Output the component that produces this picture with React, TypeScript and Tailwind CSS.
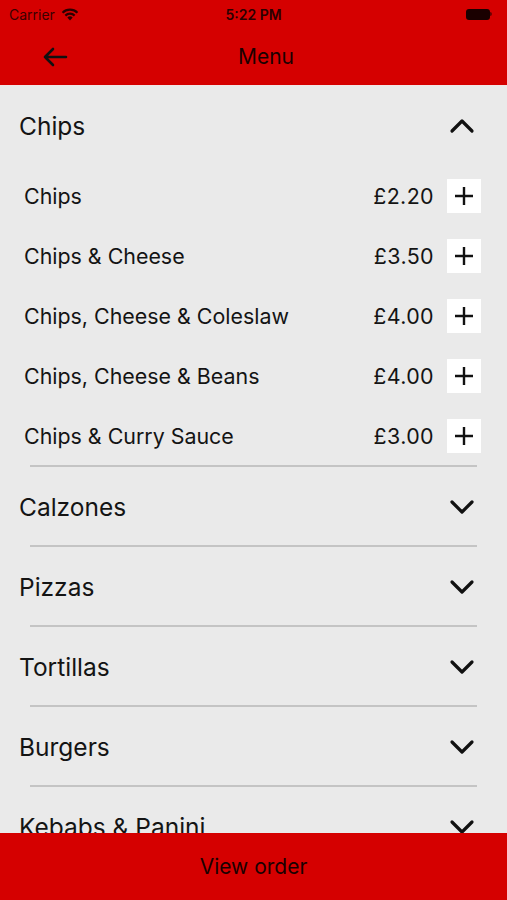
import React from "react";

const items = [
  { name: "Chips", price: "£2.20" },
  { name: "Chips & Cheese", price: "£3.50" },
  { name: "Chips, Cheese & Coleslaw", price: "£4.00" },
  { name: "Chips, Cheese & Beans", price: "£4.00" },
  { name: "Chips & Curry Sauce", price: "£3.00" },
];

const sections = ["Calzones", "Pizzas", "Tortillas", "Burgers", "Kebabs & Panini"];

function Chevron({ up }: { up?: boolean }) {
  return (
    <svg width="26" height="16" viewBox="0 0 26 16" fill="none">
      <path
        d={up ? "M3 13 L13 3 L23 13" : "M3 3 L13 13 L23 3"}
        stroke="#111"
        strokeWidth="3.2"
        strokeLinecap="round"
        strokeLinejoin="round"
      />
    </svg>
  );
}

export default function App() {
  return (
    <div
      className="relative w-[507px] h-[900px] overflow-hidden bg-[#eaeaea] text-[#141414]"
      style={{ fontFamily: "Inter, 'Noto Sans', sans-serif" }}
    >
      <div className="bg-[#d50000] h-[86px] border-b border-[#f2e6e6]">
        <div className="h-[28px] flex items-center justify-between px-[9px] relative">
          <div className="flex items-center gap-[6px] text-[14px] text-[#3a0000]">
            <span>Carrier</span>
            <svg width="18" height="13" viewBox="0 0 18 13">
              <path d="M9 12.5 L6.3 9.6 A4 4 0 0 1 11.7 9.6 Z" fill="#2a0000" />
              <path d="M3.6 6.8 A7.7 7.7 0 0 1 14.4 6.8 L12.9 8.4 A5.6 5.6 0 0 0 5.1 8.4 Z" fill="#2a0000" />
              <path d="M0.8 3.9 A11.8 11.8 0 0 1 17.2 3.9 L15.7 5.5 A9.6 9.6 0 0 0 2.3 5.5 Z" fill="#2a0000" />
            </svg>
          </div>
          <span className="absolute left-1/2 -translate-x-1/2 text-[14px] font-semibold text-[#2a0000]">5:22 PM</span>
          <div className="flex items-center mr-[6px]">
            <div className="w-[24px] h-[11px] rounded-[3px] bg-[#1a0000]" />
            <div className="w-[2px] h-[4px] bg-[#6a0000] rounded-r" />
          </div>
        </div>
        <div className="h-[57px] flex items-center relative">
          <svg className="ml-[42px]" width="26" height="22" viewBox="0 0 26 22" fill="none">
            <path d="M24 11 H3 M11 3 L3 11 L11 19" stroke="#111" strokeWidth="2.6" strokeLinecap="round" strokeLinejoin="round" />
          </svg>
          <span className="absolute left-[266px] -translate-x-1/2 text-[21px] text-[#1a0000]">Menu</span>
        </div>
      </div>

      <div>
        <div className="h-[80px] flex items-center justify-between pl-[19px] pr-[32px]">
          <span className="text-[24.5px]">Chips</span>
          <Chevron up />
        </div>
        {items.map((it) => (
          <div key={it.name} className="h-[60px] flex items-center pl-[24px] pr-[26px]">
            <span className="text-[21.4px] flex-1">{it.name}</span>
            <span className="text-[21.4px] tracking-[0.4px] mr-[13px]">{it.price}</span>
            <div className="w-[34px] h-[34px] bg-white flex items-center justify-center">
              <svg width="20" height="20" viewBox="0 0 20 20">
                <path d="M10 1 V19 M1 10 H19" stroke="#111" strokeWidth="2.4" />
              </svg>
            </div>
          </div>
        ))}
        {sections.map((s) => (
          <div key={s}>
            <div className="mx-[30px] h-[2px] bg-[#c4c4c4] -mt-[1px] mb-[1px]" />
            <div className="h-[78px] flex items-center justify-between pl-[19px] pr-[32px]">
              <span className="text-[24.5px]">{s}</span>
              <Chevron />
            </div>
          </div>
        ))}
      </div>

      <div className="absolute left-0 right-0 bottom-0 h-[67px] bg-[#d50000] flex items-center justify-center">
        <span className="text-[21px] text-[#1a0000]">View order</span>
      </div>
    </div>
  );
}
